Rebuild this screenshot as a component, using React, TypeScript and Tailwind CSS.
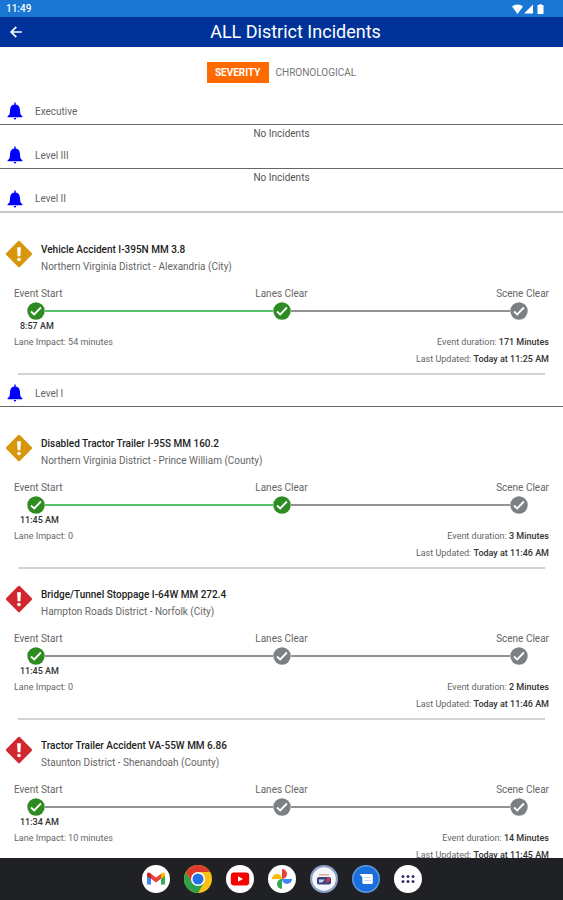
import React, { useState } from "react";

type Incident = {
  severity: "warning" | "critical";
  title: string;
  location: string;
  start: string;
  lanesClear: boolean;
  laneImpact: string;
  duration: string;
  updated: string;
};

type Level = {
  name: string;
  incidents: Incident[];
};

const levels: Level[] = [
  { name: "Executive", incidents: [] },
  { name: "Level III", incidents: [] },
  {
    name: "Level II",
    incidents: [
      {
        severity: "warning",
        title: "Vehicle Accident I-395N MM 3.8",
        location: "Northern Virginia District - Alexandria (City)",
        start: "8:57 AM",
        lanesClear: true,
        laneImpact: "54 minutes",
        duration: "171 Minutes",
        updated: "Today at 11:25 AM",
      },
    ],
  },
  {
    name: "Level I",
    incidents: [
      {
        severity: "warning",
        title: "Disabled Tractor Trailer I-95S MM 160.2",
        location: "Northern Virginia District - Prince William (County)",
        start: "11:45 AM",
        lanesClear: true,
        laneImpact: "0",
        duration: "3 Minutes",
        updated: "Today at 11:46 AM",
      },
      {
        severity: "critical",
        title: "Bridge/Tunnel Stoppage I-64W MM 272.4",
        location: "Hampton Roads District - Norfolk (City)",
        start: "11:45 AM",
        lanesClear: false,
        laneImpact: "0",
        duration: "2 Minutes",
        updated: "Today at 11:46 AM",
      },
      {
        severity: "critical",
        title: "Tractor Trailer Accident VA-55W MM 6.86",
        location: "Staunton District - Shenandoah (County)",
        start: "11:34 AM",
        lanesClear: false,
        laneImpact: "10 minutes",
        duration: "14 Minutes",
        updated: "Today at 11:45 AM",
      },
    ],
  },
];

function BellIcon() {
  return (
    <svg viewBox="0 0 16 18" className="w-4 h-[18px] shrink-0" fill="#0000ff" aria-hidden="true">
      <path d="M8 .3c.4 0 .7.4.7 1v1.300c2.600.4 4 2.200 4.200 4.700l.3 3.500c.1 1.500.8 2.700 2.200 3.500v1H.6v-1c1.400-.8 2.100-2 2.200-3.500l.3-3.500c.2-2.500 1.600-4.300 4.200-4.700V1.300c0-.6.3-1 .7-1z" />
      <path d="M6.700 16.100h2.600c-.1.900-.6 1.500-1.300 1.500s-1.200-.6-1.300-1.500z" />
    </svg>
  );
}

function SeverityIcon({ severity }: { severity: Incident["severity"] }) {
  return (
    <svg viewBox="0 0 28 28" className="w-7 h-7 shrink-0" aria-hidden="true">
      <rect x="4.300" y="4.300" width="19.400" height="19.400" rx="1.500" transform="rotate(45 14 14)" fill={severity === "warning" ? "#d8960c" : "#d0282e"} />
      <path d="M12.100 7.200h3.800l-.5 9h-2.800z" fill="#fff" />
      <circle cx="14" cy="19.500" r="1.800" fill="#fff" />
    </svg>
  );
}

function Step({ done }: { done: boolean }) {
  return (
    <svg viewBox="0 0 18 18" className="w-[18px] h-[18px] shrink-0" aria-hidden="true">
      <circle cx="9" cy="9" r="8.700" fill={done ? "#2e8b22" : "#7b8085"} />
      <path d="M4 9.500l3.200 2.900 6.700-6.900" fill="none" stroke="#fff" strokeWidth="1.800" />
    </svg>
  );
}

function IncidentCard({ incident }: { incident: Incident }) {
  return (
    <article className="pt-4">
      <div className="flex items-center gap-2 pl-[5px]">
        <div className="pb-2">
          <SeverityIcon severity={incident.severity} />
        </div>
        <div className="leading-[17px]">
          <h3 className="text-[10px] font-medium text-[#222]">{incident.title}</h3>
          <p className="text-[10px] text-[#666]">{incident.location}</p>
        </div>
      </div>

      {/* Timeline */}
      <div className="px-[14px] pt-[10px]">
        <div className="grid grid-cols-3 text-[10px] leading-4 text-[#666]">
          <span>Event Start</span>
          <span className="text-center">Lanes Clear</span>
          <span className="text-right">Scene Clear</span>
        </div>
        <div className="grid grid-cols-[1fr_auto_1fr] items-center">
          <div className="flex items-center pl-[13px]">
            <Step done />
            <div className={`flex-1 h-[2px] ${incident.lanesClear ? "bg-[#5cc26a]" : "bg-[#8f9396]"}`} />
          </div>
          <Step done={incident.lanesClear} />
          <div className="flex items-center pr-[21px]">
            <div className="flex-1 h-[2px] bg-[#8f9396]" />
            <Step done={false} />
          </div>
        </div>
        <p className="pl-[6px] text-[9px] leading-3 font-medium text-[#333]">{incident.start}</p>
        <div className="flex justify-between pt-[2px] text-[9px] leading-[17px] text-[#666]">
          <p>Lane Impact: {incident.laneImpact}</p>
          <div className="text-right">
            <p>
              Event duration: <b className="font-medium text-[#333]">{incident.duration}</b>
            </p>
            <p>
              Last Updated: <b className="font-medium text-[#333]">{incident.updated}</b>
            </p>
          </div>
        </div>
      </div>
      <hr className="mx-[18px] mt-[5px] border-t-2 border-[#d3d3d3]" />
    </article>
  );
}

function LevelSection({ level }: { level: Level }) {
  return (
    <section>
      <h2
        className={`flex items-center gap-3 h-[27px] pl-[7px] text-[10px] text-[#666] ${level.name === "Level II" ? "border-b-2 border-[#c8c8c8]" : "border-b border-[#666]"}`}
      >
        <BellIcon />
        {level.name}
      </h2>
      {level.incidents.length === 0 ? (
        <p className="text-center text-[10px] leading-[17px] text-[#555]">No Incidents</p>
      ) : (
        <div className="pt-[11px] pb-[5px]">
          {level.incidents.map((incident) => (
            <IncidentCard key={incident.title} incident={incident} />
          ))}
        </div>
      )}
    </section>
  );
}

const apps = [
  {
    name: "Gmail",
    art: (
      <>
        <circle cx="14" cy="14" r="14" fill="#fff" />
        <path d="M5 9v10.500h4v-8z" fill="#4285f4" />
        <path d="M23 9v10.500h-4v-8z" fill="#34a853" />
        <path d="M19 8.800l1.300-1c1.200-.8 2.700 0 2.700 1.500v1.600l-4 3z" fill="#fbbc04" />
        <path d="M9 8.800l-1.300-1C6.500 7 5 7.800 5 9.300v1.600l4 3z" fill="#c5221f" />
        <path d="M9 8.800l5 3.800 5-3.800v5L14 17.600l-5-3.800z" fill="#ea4335" />
      </>
    ),
  },
  {
    name: "Chrome",
    art: (
      <>
        <circle cx="14" cy="14" r="14" fill="#fbc116" />
        <path d="M1.900 7A14 14 0 0 0 14 28l6-10.500L14 14 8 17.500z" fill="#2da04c" />
        <path d="M1.900 7A14 14 0 0 1 26.100 7H14l-6 10.500z" fill="#dc3a2c" />
        <circle cx="14" cy="14" r="7" fill="#fff" />
        <circle cx="14" cy="14" r="5.500" fill="#2672e4" />
      </>
    ),
  },
  {
    name: "YouTube",
    art: (
      <>
        <circle cx="14" cy="14" r="14" fill="#fff" />
        <rect x="4.800" y="7.500" width="18.400" height="13" rx="3.200" fill="#f60000" />
        <path d="M12 11.200v5.600l5-2.800z" fill="#fff" />
      </>
    ),
  },
  {
    name: "Photos",
    art: (
      <>
        <circle cx="14" cy="14" r="14" fill="#fff" />
        <path d="M14 4a5 5 0 0 1 0 10z" fill="#ea4335" />
        <path d="M24 14a5 5 0 0 1-10 0z" fill="#4285f4" />
        <path d="M14 24a5 5 0 0 1 0-10z" fill="#34a853" />
        <path d="M4 14a5 5 0 0 1 10 0z" fill="#fbbc04" />
      </>
    ),
  },
  {
    name: "511 Traffic",
    art: (
      <>
        <circle cx="14" cy="14" r="14" fill="#8da0c8" />
        <circle cx="14" cy="14" r="11.800" fill="#f4f6fb" />
        <path d="M9 9.800h10" stroke="#e0a184" strokeWidth="1.400" />
        <rect x="7" y="12" width="14" height="7.500" rx="2" fill="#38427e" />
        <path d="M9 14.500h6l-3 3H9z" fill="#c9cfe6" />
        <path d="M17 12.500h3v3l-4 3z" fill="#d03a4b" />
      </>
    ),
  },
  {
    name: "Messages",
    art: (
      <>
        <circle cx="14" cy="14" r="14" fill="#5d97e0" />
        <circle cx="14" cy="14" r="12.500" fill="#1b6fdc" />
        <path d="M7.500 9h11.800c.9 0 1.500.6 1.500 1.500v7c0 .9-.6 1.500-1.500 1.500h-7.500c-.9 0-1.500-.6-1.500-1.500v-5.300z" fill="#fff" />
        <path d="M12.500 12.500h6M12.500 15.500h6" stroke="#b9d2f5" strokeWidth="1" />
      </>
    ),
  },
  {
    name: "All apps",
    art: (
      <>
        <circle cx="14" cy="14" r="14" fill="#fff" />
        {[9, 14, 19].map((x) => (
          <g key={x} fill="#34346c">
            <circle cx={x} cy="11.500" r="1.500" />
            <circle cx={x} cy="16.500" r="1.500" />
          </g>
        ))}
      </>
    ),
  },
];

export default function App() {
  const [tab, setTab] = useState("SEVERITY");

  return (
    <div className="h-screen flex flex-col overflow-hidden bg-white font-['Roboto',sans-serif]">
      {/* Status bar */}
      <div className="flex shrink-0 items-center justify-between h-[17px] pl-[6px] pr-[18px] bg-[#1976d2] text-white">
        <span className="text-[10px] leading-[17px] font-medium">11:49</span>
        <svg viewBox="0 0 34 12" className="w-[34px] h-3" fill="#fff" aria-hidden="true">
          <path d="M1 3.500C4 .8 9 .8 12 3.500L6.500 11z" />
          <path d="M22 1.500v9h-9z" />
          <path d="M26.500 2h2V1h2v1h2v9h-6z" />
        </svg>
      </div>

      <header className="grid shrink-0 grid-cols-[32px_1fr_32px] items-center h-[30px] bg-[#003399] text-white">
        <button type="button" aria-label="Back" className="flex h-full items-center pl-[9px]">
          <svg viewBox="0 0 14 14" className="w-[14px] h-[14px]" fill="none" stroke="#fff" strokeWidth="1.700" aria-hidden="true">
            <path d="M12.800 7H2.500M7.300 1.900L2.200 7l5.100 5.100" />
          </svg>
        </button>
        <h1 className="pl-7 text-center text-lg font-normal">ALL District Incidents</h1>
      </header>

      <main className="flex-1 min-h-0 overflow-hidden">
        <div className="flex justify-center gap-[7px] pt-[15px] pb-[15px]">
          {["SEVERITY", "CHRONOLOGICAL"].map((name) => (
            <button
              key={name}
              type="button"
              aria-pressed={tab === name}
              onClick={() => setTab(name)}
              className={`h-[21px] text-[10px] cursor-pointer ${tab === name ? "px-2 bg-[#ff6a00] text-white font-bold" : "text-[#757575]"}`}
            >
              {name}
            </button>
          ))}
        </div>
        {levels.map((level) => (
          <LevelSection key={level.name} level={level} />
        ))}
      </main>

      {/* Dock */}
      <nav className="flex shrink-0 items-center justify-center gap-[14px] h-[42px] bg-[#202124]">
        {apps.map((app) => (
          <button key={app.name} type="button" aria-label={app.name} className="cursor-pointer">
            <svg viewBox="0 0 28 28" className="w-7 h-7" aria-hidden="true">
              {app.art}
            </svg>
          </button>
        ))}
      </nav>
    </div>
  );
}
